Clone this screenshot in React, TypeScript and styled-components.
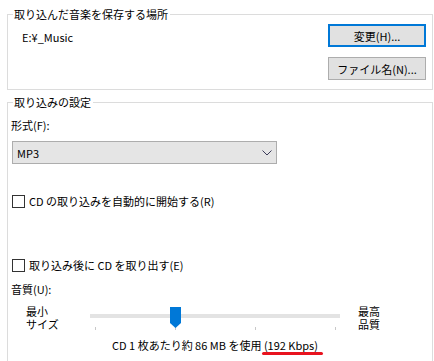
import styled, { createGlobalStyle } from 'styled-components';

const GlobalStyle = createGlobalStyle`
    html, body {
        margin: 0;
        padding: 0;
        background: #ffffff;
    }
    body {
        font-family: "Noto Sans CJK JP", "Noto Sans", sans-serif;
        font-size: 11px;
        color: #000000;
    }
`;

const Page = styled.div`
    width: 434px;
    height: 361px;
    overflow: hidden;
    padding-top: 6px;
    box-sizing: border-box;
`;

const Group = styled.fieldset<{ $open?: boolean }>`
    box-sizing: border-box;
    width: 426px;
    margin: ${(p) => (p.$open ? '4px 0 0 7px' : '0 0 0 7px')};
    padding: 0 6px 9px 0;
    border: 1px solid #dcdcdc;
    ${(p) => (p.$open ? 'border-bottom: none; min-height: 300px;' : '')}
`;

const Legend = styled.legend`
    margin-left: 5px;
    padding: 0 2px 0 1px;
    line-height: 16px;
    height: 16px;
`;

const LocationRow = styled.div`
    display: flex;
    justify-content: space-between;
    align-items: flex-start;
    padding-top: 2px;
`;

const PathText = styled.div`
    margin: 5px 0 0 14px;
    line-height: 16px;
`;

const ButtonColumn = styled.div`
    display: flex;
    flex-direction: column;
    gap: 10px;
`;

const Button = styled.button<{ $default?: boolean }>`
    box-sizing: border-box;
    width: 98px;
    height: 23px;
    padding: 0;
    font: inherit;
    color: #000000;
    background: #e1e1e1;
    border: ${(p) => (p.$default ? '2px solid #0078d7' : '1px solid #adadad')};
`;

const Label = styled.div<{ $top: number }>`
    margin: ${(p) => p.$top}px 0 0 3px;
    line-height: 16px;
`;

const Select = styled.div`
    box-sizing: border-box;
    width: 265px;
    height: 23px;
    margin: 8px 0 0 4px;
    padding: 0 0 0 4px;
    display: flex;
    align-items: center;
    justify-content: space-between;
    background: #e5e5e5;
    border: 1px solid #adadad;
`;

const Chevron = styled.svg`
    margin-right: 4px;
`;

const CheckRow = styled.label<{ $top: number }>`
    display: flex;
    align-items: center;
    gap: 4px;
    margin: ${(p) => p.$top}px 0 0 4px;
    line-height: 16px;
`;

const Box = styled.span`
    box-sizing: border-box;
    width: 13px;
    height: 13px;
    border: 1px solid #333333;
    background: #ffffff;
`;

const QualityRow = styled.div`
    display: flex;
    align-items: flex-start;
    margin-top: 8px;
`;

const EndLabel = styled.div<{ $width: number }>`
    width: ${(p) => p.$width}px;
    padding-left: 18px;
    box-sizing: border-box;
    line-height: 13px;
`;

const Slider = styled.div`
    position: relative;
    width: 250px;
    padding-top: 9px;
`;

const Track = styled.div`
    height: 4px;
    background: #e3e3e3;
`;

const Thumb = styled.svg`
    position: absolute;
    top: 2px;
    left: 80px;
`;

const Ticks = styled.div`
    display: flex;
    justify-content: space-between;
    padding: 9px 4px 0 5px;
`;

const Tick = styled.span`
    width: 1px;
    height: 3px;
    background: #c8c8c8;
`;

const Usage = styled.div`
    margin: 6px 0 0 82px;
    width: 250px;
    text-align: center;
    line-height: 16px;
    white-space: nowrap;
`;

const Marked = styled.span`
    position: relative;
    &::after {
        content: '';
        position: absolute;
        left: -2px;
        right: -5px;
        bottom: -2px;
        height: 3px;
        border-radius: 2px;
        background: #e8131f;
    }
`;

export default function App() {
    return (
        <Page>
            <GlobalStyle />
            <Group>
                <Legend>取り込んだ音楽を保存する場所</Legend>
                <LocationRow>
                    <PathText>E:¥_Music</PathText>
                    <ButtonColumn>
                        <Button $default>変更(H)...</Button>
                        <Button>ファイル名(N)...</Button>
                    </ButtonColumn>
                </LocationRow>
            </Group>
            <Group $open>
                <Legend>取り込みの設定</Legend>
                <Label $top={7}>形式(F):</Label>
                <Select>
                    <span>MP3</span>
                    <Chevron width="10" height="6" viewBox="0 0 10 6">
                        <polyline points="0.5,0.5 5,5 9.5,0.5" fill="none" stroke="#3c3c5a" strokeWidth="1" />
                    </Chevron>
                </Select>
                <CheckRow $top={29}>
                    <Box />
                    CD の取り込みを自動的に開始する(R)
                </CheckRow>
                <CheckRow $top={48}>
                    <Box />
                    取り込み後に CD を取り出す(E)
                </CheckRow>
                <Label $top={8}>音質(U):</Label>
                <QualityRow>
                    <EndLabel $width={82}>最小<br />サイズ</EndLabel>
                    <Slider>
                        <Track />
                        <Thumb width="11" height="21" viewBox="0 0 11 21">
                            <path d="M0 0 H11 V16 L5.5 21 L0 16 Z" fill="#0078d7" />
                        </Thumb>
                        <Ticks>
                            <Tick />
                            <Tick />
                            <Tick />
                            <Tick />
                        </Ticks>
                    </Slider>
                    <EndLabel $width={86}>最高<br />品質</EndLabel>
                </QualityRow>
                <Usage>
                    CD 1 枚あたり約 86 MB を使用 <Marked>(192 Kbps)</Marked>
                </Usage>
            </Group>
        </Page>
    );
}
